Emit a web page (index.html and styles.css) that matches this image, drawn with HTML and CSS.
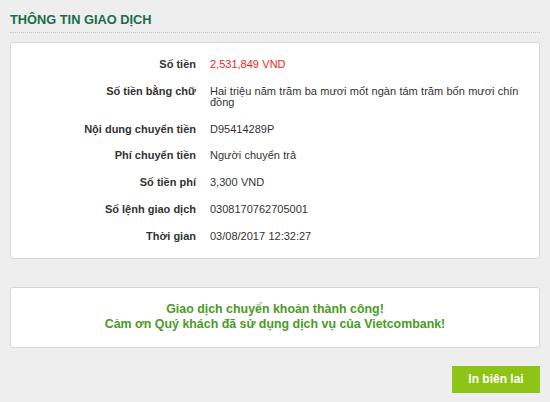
FILE: index.html
```html
<!DOCTYPE html>
<html lang="vi">
<head>
<meta charset="utf-8">
<link rel="stylesheet" href="styles.css">
</head>
<body>
<div class="page">
  <h1 class="title">THÔNG TIN GIAO DỊCH</h1>
  <div class="card details">
    <div class="row"><div class="label">Số tiền</div><div class="value red">2,531,849 VND</div></div>
    <div class="row"><div class="label">Số tiền bằng chữ</div><div class="value">Hai triệu năm trăm ba mươi mốt ngàn tám trăm bốn mươi chín đồng</div></div>
    <div class="row"><div class="label">Nội dung chuyển tiền</div><div class="value">D95414289P</div></div>
    <div class="row"><div class="label">Phí chuyển tiền</div><div class="value">Người chuyển trả</div></div>
    <div class="row"><div class="label">Số tiền phí</div><div class="value">3,300 VND</div></div>
    <div class="row"><div class="label">Số lệnh giao dịch</div><div class="value">0308170762705001</div></div>
    <div class="row"><div class="label">Thời gian</div><div class="value">03/08/2017 12:32:27</div></div>
  </div>
  <div class="card success">
    <p>Giao dịch chuyển khoản thành công!</p>
    <p>Cảm ơn Quý khách đã sử dụng dịch vụ của Vietcombank!</p>
  </div>
  <div class="actions">
    <button class="btn">In biên lai</button>
  </div>
</div>
</body>
</html>
```
FILE: styles.css
```css
html, body {
  margin: 0;
  padding: 0;
  background: #eeeeee;
}
body {
  font-family: "Liberation Sans", Arial, sans-serif;
  color: #333;
}
.page {
  padding: 10px 10px 0 10px;
  display: flex;
  flex-direction: column;
}
.title {
  margin: 0;
  font-size: 12.8px;
  line-height: 17px;
  font-weight: bold;
  color: #1a6d4b;
  padding-top: 1px;
  padding-bottom: 4px;
  border-bottom: 1px dotted #c4c4c4;
}
.card {
  background: #fff;
  border: 1px solid #d6d6d6;
  border-radius: 3px;
}
.details {
  margin-top: 9px;
  padding: 16px 0 16px 0;
  display: flex;
  flex-direction: column;
  gap: 15.8px;
}
.row {
  display: grid;
  grid-template-columns: 185px 310px;
  column-gap: 14px;
  font-size: 11px;
  line-height: 11px;
}
.label {
  text-align: right;
  font-weight: bold;
  color: #333;
}
.value {
  color: #333;
  word-spacing: 0.3px;
}
.value.red {
  color: #f01d1d;
}
.success {
  margin-top: 28px;
  height: 59px;
  display: flex;
  flex-direction: column;
  justify-content: center;
  align-items: center;
}
.success p {
  margin: 0;
  font-size: 12.4px;
  line-height: 15px;
  font-weight: bold;
  color: #4a9a26;
  text-align: center;
}
.actions {
  display: flex;
  justify-content: flex-end;
  margin-top: 18px;
}
.btn {
  width: 88px;
  height: 27px;
  border: none;
  background: #8dc415;
  color: #fff;
  font-family: "Liberation Sans", Arial, sans-serif;
  font-weight: bold;
  font-size: 12px;
  padding: 0;
}
```
